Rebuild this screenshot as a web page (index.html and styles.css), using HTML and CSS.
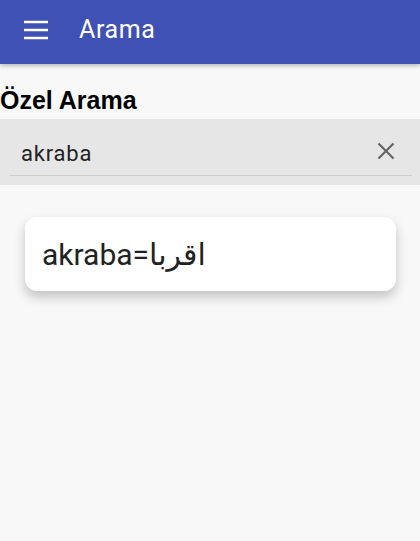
FILE: index.html
```html
<!DOCTYPE html>
<html lang="tr">
<head>
<meta charset="utf-8">
<link rel="stylesheet" href="styles.css">
</head>
<body>
<header class="appbar">
  <svg class="menu" width="26" height="20" viewBox="0 0 26 20"><path d="M1 2h24M1 10h24M1 18h24" stroke="#fff" stroke-width="2.4" fill="none"/></svg>
  <span class="title">Arama</span>
</header>
<main class="content">
  <h1 class="heading">Özel Arama</h1>
  <div class="search">
    <div class="field">
      <span class="query">akraba</span>
      <svg class="clear" width="20" height="20" viewBox="0 0 24 24"><path d="M3 3l18 18M21 3L3 21" stroke="#666" stroke-width="2.6" fill="none"/></svg>
    </div>
  </div>
  <div class="card"><span class="result">akraba=<span class="ar" dir="rtl">اقربا</span></span></div>
</main>
</body>
</html>
```
FILE: styles.css
```css
html, body { margin: 0; padding: 0; }
body {
  background: #f8f8f8;
  font-family: Roboto, "DejaVu Sans", sans-serif;
  width: 420px;
  height: 541px;
  overflow: hidden;
}
.appbar {
  height: 64px;
  background: #3f51b5;
  display: flex;
  align-items: center;
  padding-left: 23px;
  box-shadow: 0 2px 4px rgba(0,0,0,0.25);
  position: relative;
}
.menu { display: block; margin-top: -4px; }
.title {
  color: #fff;
  font-size: 25px;
  letter-spacing: 0.6px;
  margin-left: 30px;
  margin-top: -5px;
}
.content { display: flex; flex-direction: column; }
.heading {
  margin: 18px 0 0 0;
  font-family: "Liberation Sans", Arial, sans-serif;
  font-size: 25px;
  font-weight: bold;
  color: #000;
  height: 37px;
  line-height: 37px;
}
.search {
  background: #e6e6e6;
  height: 66px;
  padding: 0 8px 0 10px;
}
.field {
  height: 56px;
  border-bottom: 1px solid #cdcdcd;
  display: flex;
  align-items: center;
  justify-content: space-between;
  padding: 0 16px 0 11px;
}
.query { font-size: 22px; letter-spacing: 0.8px; color: #222; margin-top: 12px; }
.clear { margin-top: 8px; }
.card {
  margin: 32px 24px 0 25px;
  height: 74px;
  background: #fff;
  border-radius: 12px;
  box-shadow: 0 6px 12px rgba(0,0,0,0.22);
  display: flex;
  align-items: center;
  padding-left: 17px;
}
.result { font-size: 30px; color: #222; margin-top: 0; }
.ar { font-size: 30px; }
```
